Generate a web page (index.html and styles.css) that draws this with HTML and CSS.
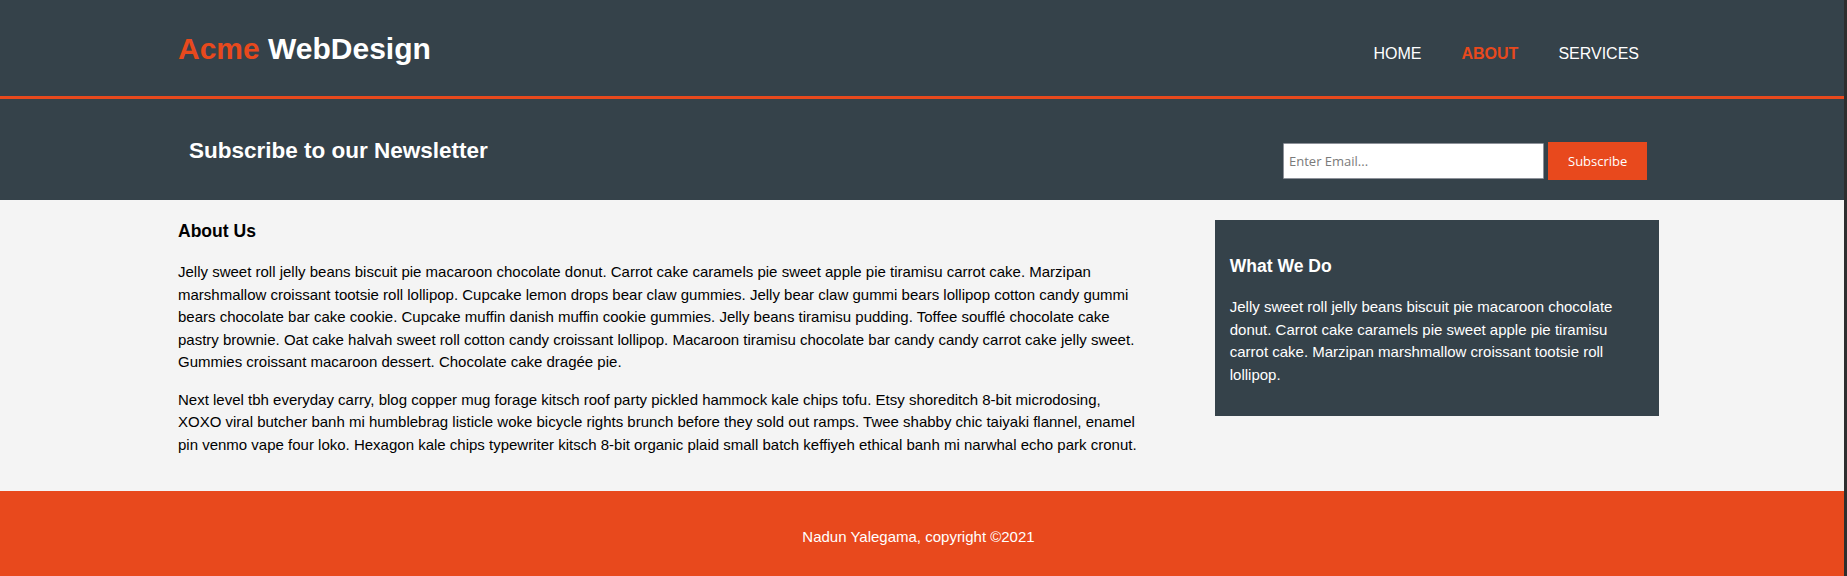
FILE: index.html
```html
<!DOCTYPE html>
<html lang="en">
<head>
<meta charset="utf-8">
<title>Acme Web Design | About</title>
<link rel="stylesheet" href="styles.css">
</head>
<body>
<header class="site-header">
  <div class="container header-inner">
    <div class="branding">
      <h1 class="logo"><span class="highlight">Acme</span> WebDesign</h1>
    </div>
    <nav class="main-nav">
      <ul class="nav-list">
        <li class="nav-item"><a class="nav-link" href="#">Home</a></li>
        <li class="nav-item"><a class="nav-link current" href="#">About</a></li>
        <li class="nav-item"><a class="nav-link" href="#">Services</a></li>
      </ul>
    </nav>
  </div>
</header>

<section class="newsletter">
  <div class="container newsletter-inner">
    <h1 class="newsletter-title">Subscribe to our Newsletter</h1>
    <form class="subscribe-form">
      <input class="email-input" type="email" placeholder="Enter Email...">
      <button class="button-1" type="submit">Subscribe</button>
    </form>
  </div>
</section>

<section class="main-section">
  <div class="container main-inner">
    <article class="main-col">
      <h3 class="page-title">About Us</h3>
      <p class="text">Jelly sweet roll jelly beans biscuit pie macaroon chocolate donut. Carrot cake caramels pie sweet apple pie tiramisu carrot cake. Marzipan marshmallow croissant tootsie roll lollipop. Cupcake lemon drops bear claw gummies. Jelly bear claw gummi bears lollipop cotton candy gummi bears chocolate bar cake cookie. Cupcake muffin danish muffin cookie gummies. Jelly beans tiramisu pudding. Toffee soufflé chocolate cake pastry brownie. Oat cake halvah sweet roll cotton candy croissant lollipop. Macaroon tiramisu chocolate bar candy candy carrot cake jelly sweet. Gummies croissant macaroon dessert. Chocolate cake dragée pie.</p>
      <p class="text">Next level tbh everyday carry, blog copper mug forage kitsch roof party pickled hammock kale chips tofu. Etsy shoreditch 8-bit microdosing, XOXO viral butcher banh mi humblebrag listicle woke bicycle rights brunch before they sold out ramps. Twee shabby chic taiyaki flannel, enamel pin venmo vape four loko. Hexagon kale chips typewriter kitsch 8-bit organic plaid small batch keffiyeh ethical banh mi narwhal echo park cronut.</p>
    </article>
    <aside class="sidebar">
      <div class="dark">
        <h3 class="dark-title">What We Do</h3>
        <p class="text">Jelly sweet roll jelly beans biscuit pie macaroon chocolate donut. Carrot cake caramels pie sweet apple pie tiramisu carrot cake. Marzipan marshmallow croissant tootsie roll lollipop.</p>
      </div>
    </aside>
  </div>
</section>

<footer class="site-footer">
  <div class="container">
    <p class="copyright">Nadun Yalegama, copyright &copy;2021</p>
  </div>
</footer>
</body>
</html>
```

FILE: styles.css
```css
html {
  background: #2e2e2e;
}

body {
  margin: 0 3px 0 0;
  padding: 0;
  background: #f4f4f4;
  font: 15px/1.5 "Liberation Sans", Arial, Helvetica, sans-serif;
  color: #000;
}

.container {
  width: 1481px;
  margin-left: 178px;
}

/* Header */
.site-header {
  background: #35424a;
  color: #fff;
  height: 96px;
  border-bottom: 3px solid #e8491d;
}

.header-inner {
  display: flex;
  justify-content: space-between;
  align-items: baseline;
  padding-top: 26px;
}

.logo {
  margin: 0;
  font-size: 30px;
  line-height: 45px;
  font-weight: bold;
}

.highlight {
  color: #e8491d;
}

.nav-list {
  display: flex;
  margin: 0;
  padding: 0;
  list-style: none;
}

.nav-item {
  padding: 0 20px;
}

.nav-link {
  color: #fff;
  text-decoration: none;
  text-transform: uppercase;
  font-size: 16px;
  line-height: 24px;
}

.nav-link.current {
  color: #e8491d;
  font-weight: bold;
}

/* Newsletter */
.newsletter {
  background: #35424a;
  color: #fff;
  height: 101px;
}

.newsletter-inner {
  display: flex;
  justify-content: space-between;
  align-items: flex-start;
  box-sizing: border-box;
  padding: 0 12px 0 11px;
}

.newsletter-title {
  margin: 34.5px 0 0;
  font-size: 22.5px;
  line-height: 33.75px;
  font-weight: bold;
}

.subscribe-form {
  display: flex;
  align-items: center;
  gap: 4px;
  margin-top: 43px;
}

.email-input {
  box-sizing: border-box;
  width: 261px;
  height: 36px;
  padding: 4px 5px;
  border: 1px solid #8d9199;
  border-radius: 1px;
  background: #fff;
  font: 13px "Open Sans", "Noto Sans", sans-serif;
  color: #333;
}

.email-input::placeholder {
  color: #7a7a7a;
}

.button-1 {
  box-sizing: border-box;
  height: 38px;
  width: 99px;
  padding: 0 20px;
  border: 0;
  background: #e8491d;
  color: #fff;
  font: 13px "Open Sans", "Noto Sans", sans-serif;
}

/* Main */
.main-inner {
  display: flex;
  justify-content: space-between;
  align-items: flex-start;
}

.main-col {
  width: 65%;
}

.page-title,
.dark-title {
  font-size: 17.55px;
  line-height: 1.5;
  margin: 17.55px 0;
  font-weight: bold;
}

.text {
  margin: 15px 0;
}

.sidebar {
  width: 30%;
  margin-top: 10px;
}

.dark {
  background: #35424a;
  color: #fff;
  padding: 15px;
  margin: 10px 0;
}

.dark-title {
  margin-top: 17.55px;
}

/* Footer */
.site-footer {
  margin-top: 20px;
  padding: 20px 0;
  background: #e8491d;
  color: #fff;
}

.copyright {
  margin: 15px 0;
  text-align: center;
}
```
